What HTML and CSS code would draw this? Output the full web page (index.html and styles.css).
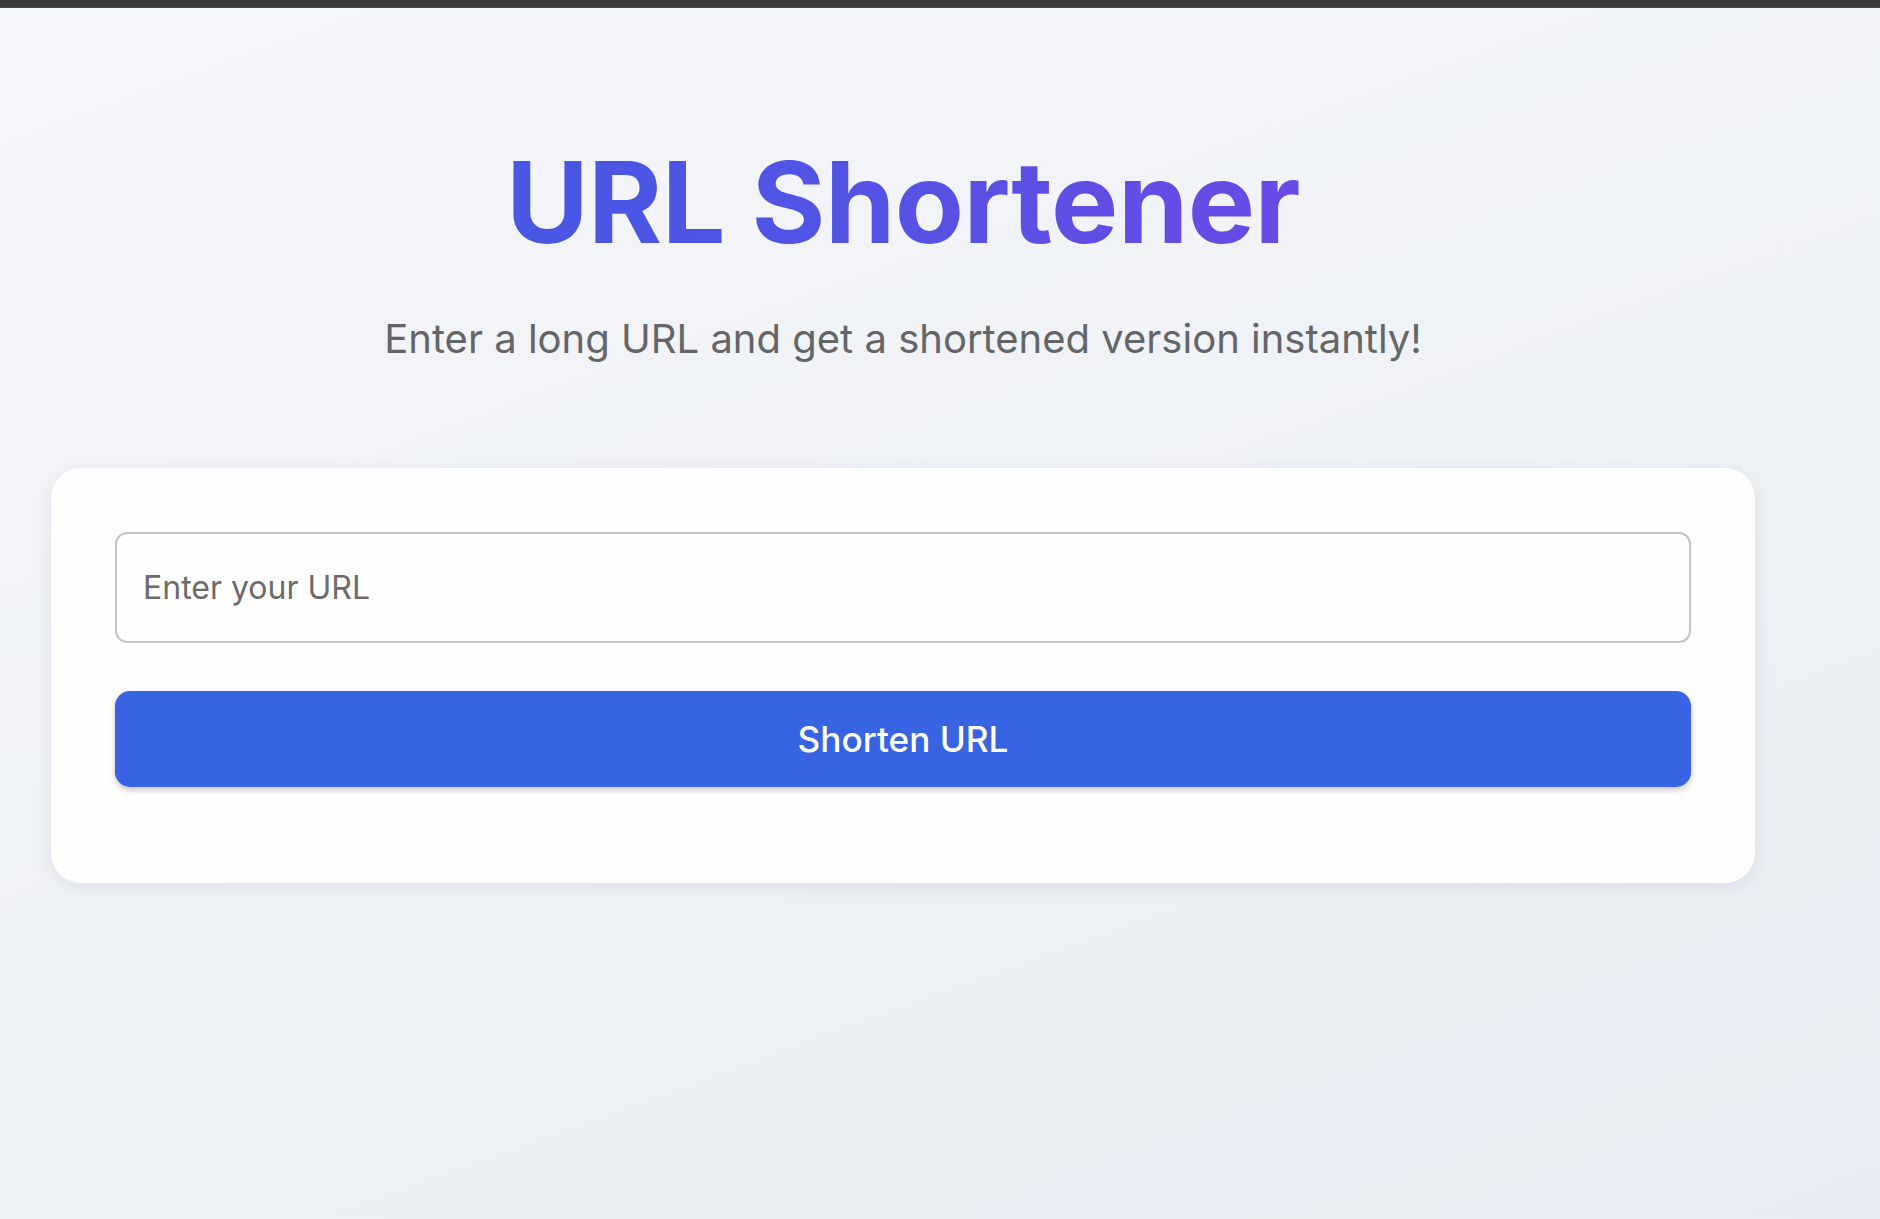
FILE: index.html
```html
<!DOCTYPE html>
<html lang="en">
<head>
<meta charset="utf-8">
<title>URL Shortener</title>
<link rel="stylesheet" href="styles.css">
</head>
<body>
<div class="topbar"></div>
<main class="wrapper">
  <h1 class="title"><span class="title-text">URL Shortener</span></h1>
  <p class="subtitle">Enter a long URL and get a shortened version instantly!</p>
  <section class="card">
    <form class="form">
      <input class="url-input" type="text" placeholder="Enter your URL">
      <button class="submit" type="button">Shorten URL</button>
    </form>
  </section>
</main>
</body>
</html>
```
FILE: styles.css
```css
html, body {
  margin: 0;
  padding: 0;
}
body {
  min-height: 1219px;
  background: linear-gradient(160deg, #f5f6f9 0%, #eef1f5 55%, #e9ecf2 100%);
  font-family: Inter, "Noto Sans", sans-serif;
}
.topbar {
  height: 7px;
  background: #3b3b3b;
  border-bottom: 1px solid #4b4d4c;
}
.wrapper {
  width: 1806px;
  box-sizing: border-box;
  padding: 0 51px;
  text-align: center;
}
.title {
  margin: 127px 0 0;
  font-size: 113px;
  line-height: 1.2;
  font-weight: 700;
  letter-spacing: -0.5px;
}
.title-text {
  display: inline-block;
  background: linear-gradient(90deg, #4857e3 0%, #5552e4 50%, #6a4ae5 100%);
  -webkit-background-clip: text;
  background-clip: text;
  color: transparent;
}
.subtitle {
  margin: 38px 0 0;
  font-size: 40px;
  line-height: 1.5;
  color: #646568;
}
.card {
  margin-top: 99px;
  background: #fefefe;
  border-radius: 30px;
  padding: 64px 64px 96px;
  box-shadow: 0 4px 18px rgba(30, 40, 70, 0.08);
}
.form {
  display: flex;
  flex-direction: column;
  gap: 48px;
}
.url-input {
  box-sizing: border-box;
  height: 111px;
  width: 100%;
  border: 2px solid #c4c4c4;
  border-radius: 12px;
  padding: 0 26px;
  font-family: Inter, "Noto Sans", sans-serif;
  font-size: 32px;
  color: #333;
  background: #fefefe;
  outline: none;
}
.url-input::placeholder {
  color: #6b6b6b;
}
.submit {
  height: 96px;
  width: 100%;
  border: none;
  border-radius: 15px;
  background: #3864e3;
  color: #ffffff;
  font-family: Inter, "Noto Sans", sans-serif;
  font-size: 35.2px;
  font-weight: 500;
  box-shadow: 0 3px 6px rgba(0, 0, 0, 0.22);
  cursor: pointer;
}
```
